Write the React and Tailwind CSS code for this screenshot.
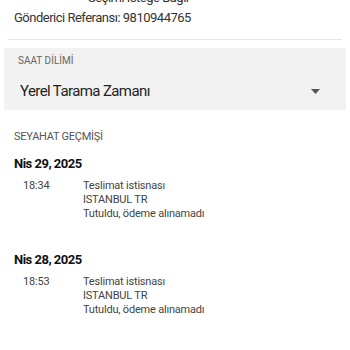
export default function App() {
  const events = [
    { date: "Nis 29, 2025", time: "18:34" },
    { date: "Nis 28, 2025", time: "18:53" },
  ];
  return (
    <div className="w-[350px] h-[350px] overflow-hidden bg-white font-['Roboto',sans-serif] relative">
      <div className="absolute left-[88px] top-[-10px] text-[13px] tracking-[-0.5px] text-[#333] leading-[16px] whitespace-nowrap">Seçimi İsteğe Bağlı</div>
      <div className="pt-[10px] px-[14px] text-[13px] tracking-[-0.5px] leading-[16px] text-[#333]">Gönderici Referansı: 9810944765</div>
      <div className="mx-[8px] mt-[13px] h-px bg-[#e6e6e6]"></div>
      <div className="mx-[4px] mt-[8px] h-[62px] bg-[#f2f2f2] px-[14px] pt-[7px]">
        <div className="text-[10px] leading-[12px] text-[#666]">SAAT DİLİMİ</div>
        <div className="mt-[15px] flex items-center justify-between pl-[2px] pr-[12px]">
          <span className="text-[15px] tracking-[-0.6px] leading-[18px] text-[#222]">Yerel Tarama Zamanı</span>
          <svg width="9" height="5" viewBox="0 0 9 5"><path d="M0 0h9L4.5 5z" fill="#555" /></svg>
        </div>
      </div>
      <div className="px-[14px] pt-[20px]">
        <div className="text-[11px] tracking-[-0.25px] leading-[13px] text-[#555]">SEYAHAT GEÇMİŞİ</div>
        {events.map((e, i) => (
          <div key={i} className={i === 0 ? "mt-[13px]" : "mt-[31px]"}>
            <div className="text-[13px] tracking-[-0.5px] leading-[16px] font-bold text-[#111]">{e.date}</div>
            <div className="mt-[7px] flex text-[11px] tracking-[-0.2px] leading-[14px] text-[#444]">
              <div className="w-[69px] pl-[9px]">{e.time}</div>
              <div>
                <div>Teslimat istisnası</div>
                <div>ISTANBUL TR</div>
                <div>Tutuldu, ödeme alınamadı</div>
              </div>
            </div>
          </div>
        ))}
      </div>
    </div>
  );
}
